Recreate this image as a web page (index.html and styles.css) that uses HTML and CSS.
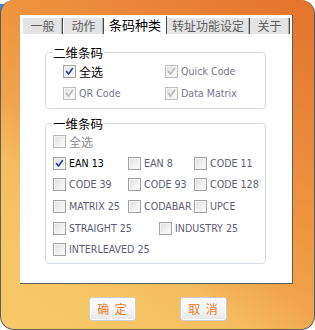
FILE: index.html
```html
<!DOCTYPE html>
<html>
<head>
<meta charset="utf-8">
<link rel="stylesheet" href="styles.css">
</head>
<body>
<div class="win">
  <div class="sheet">
    <div class="tabs">
      <div class="tab tab-sm gap">一般</div>
      <div class="tab tab-sm">动作</div>
      <div class="tab tab-md active">条码种类</div>
      <div class="tab tab-lg">转址功能设定</div>
      <div class="tab tab-sm">关于</div>
    </div>
    <div class="page">
      <fieldset class="group g2d">
        <legend>二维条码</legend>
        <div class="grid2">
          <label class="cb on"><span class="box"><svg viewBox="0 0 13 13"><path d="M3 6.5 L5.3 9.6 L10 3"/></svg></span><span class="cjk">全选</span></label>
          <label class="cb dis"><span class="box"><svg viewBox="0 0 13 13"><path d="M3 6.5 L5.3 9.6 L10 3"/></svg></span>Quick Code</label>
          <label class="cb dis"><span class="box"><svg viewBox="0 0 13 13"><path d="M3 6.5 L5.3 9.6 L10 3"/></svg></span>QR Code</label>
          <label class="cb dis"><span class="box"><svg viewBox="0 0 13 13"><path d="M3 6.5 L5.3 9.6 L10 3"/></svg></span>Data Matrix</label>
        </div>
      </fieldset>
      <fieldset class="group g1d">
        <legend>一维条码</legend>
        <div class="row">
          <label class="cb grey"><span class="box"></span><span class="cjk">全选</span></label>
        </div>
        <div class="row">
          <label class="cb on c1"><span class="box"><svg viewBox="0 0 13 13"><path d="M3 6.5 L5.3 9.6 L10 3"/></svg></span>EAN 13</label>
          <label class="cb c2"><span class="box"></span>EAN 8</label>
          <label class="cb"><span class="box"></span>CODE 11</label>
        </div>
        <div class="row">
          <label class="cb c1"><span class="box"></span>CODE 39</label>
          <label class="cb c2"><span class="box"></span>CODE 93</label>
          <label class="cb"><span class="box"></span>CODE 128</label>
        </div>
        <div class="row">
          <label class="cb c1"><span class="box"></span>MATRIX 25</label>
          <label class="cb c2"><span class="box"></span>CODABAR</label>
          <label class="cb"><span class="box"></span>UPCE</label>
        </div>
        <div class="row">
          <label class="cb cw"><span class="box"></span>STRAIGHT 25</label>
          <label class="cb"><span class="box"></span>INDUSTRY 25</label>
        </div>
        <div class="row">
          <label class="cb"><span class="box"></span>INTERLEAVED 25</label>
        </div>
      </fieldset>
    </div>
  </div>
  <div class="buttons">
    <button class="btn">确 定</button>
    <button class="btn">取 消</button>
  </div>
</div>
</body>
</html>
```

FILE: styles.css
```css
html {
  /* white desktop with a sliver of blue behind the rounded top-left corner */
  background: linear-gradient(#3b8be0, #3b8be0) 0 4px / 6px 13px no-repeat, #ffffff;
}

body {
  margin: 0;
}

.win {
  width: 315px;
  height: 330px;
  box-sizing: border-box;
  border: 1px solid #5c5c5c;
  border-top: 0;
  border-radius: 14px;
  padding-top: 15px;
  background: linear-gradient(215deg, #e3732a 0%, #eb863a 25%, #ef953f 42%, #f1a34d 57%, #f4bb5f 68%, #f6c465 80%, #f7c867 100%);
  overflow: hidden;
}

.sheet {
  margin-left: 19px;
  width: 273px;
  height: 269px;
  box-sizing: border-box;
  background: #ffffff;
  border-right: 1px solid #5e5e5e;
  border-bottom: 1px solid #5e5e5e;
}

.tabs {
  display: flex;
  align-items: flex-end;
  height: 19px;
  padding-left: 3px;
}

.tab {
  box-sizing: border-box;
  height: 16px;
  background: #e3e3e3;
  color: #5c5c5c;
  font-family: "Noto Sans CJK SC", sans-serif;
  font-size: 12px;
  line-height: 16px;
  text-align: center;
  border-right: 1px solid #4a4a4a;
  box-shadow: inset -1px 0 0 #b4b4b4;
}

.tab.gap {
  margin-right: 1px;
}

.tab-sm { width: 40px; }
.tab-md { width: 63px; }
.tab-lg { width: 83px; }

.tab.active {
  height: 18px;
  background: #ffffff;
  color: #000000;
  font-size: 13px;
  line-height: 17px;
  box-shadow: none;
}

.page {
  padding: 11px 0 0 25px;
}

.group {
  margin: 0;
  width: 221px;
  box-sizing: border-box;
  border: 1px solid #d3dae2;
  border-radius: 4px;
  padding: 0 0 0 7px;
}

.group legend {
  padding: 0 1px;
  margin-left: -1px;
  font-family: "Noto Sans CJK SC", sans-serif;
  font-size: 12.5px;
  line-height: 15px;
  color: #000000;
}

.g2d {
  padding-bottom: 4px;
}

.g1d {
  margin-top: 7px;
  padding-bottom: 2px;
}

.grid2 {
  display: grid;
  grid-template-columns: 102px auto;
  grid-auto-rows: 22px;
  align-items: center;
  margin-left: 10px;
}

.row {
  display: flex;
  align-items: center;
  height: 21.6px;
}

.c1 { width: 75px; }
.c2 { width: 66px; }
.cw { width: 106px; }

.cb {
  display: flex;
  align-items: center;
  gap: 3px;
  font-family: "DejaVu Sans Condensed", "DejaVu Sans", sans-serif;
  font-stretch: condensed;
  font-size: 10.6px;
  line-height: 13px;
  color: #5d5d72;
  white-space: nowrap;
}

.cjk {
  font-family: "Noto Sans CJK SC", sans-serif;
  font-size: 12px;
}

.cb.on {
  color: #000000;
}

.cb.dis {
  color: #76768a;
}

.cb.grey {
  color: #8c8c8c;
}

.box {
  flex: none;
  width: 13px;
  height: 13px;
  box-sizing: border-box;
  border: 1px solid #a3a3a3;
  background: linear-gradient(135deg, #dedede 0%, #f0f0f0 55%, #fbfbfb 100%);
  box-shadow: inset 0 0 0 1px #f4f4f4;
}

.box svg {
  display: block;
  width: 11px;
  height: 11px;
  margin: 0;
}

.box path {
  fill: none;
  stroke: #21398f;
  stroke-width: 1.9;
  stroke-linecap: round;
  stroke-linejoin: round;
}

.cb.dis .box {
  border-color: #bdbdbd;
}

.cb.dis .box path {
  stroke: #b5b5b5;
}

.cb.grey .box {
  border-color: #b9b9b9;
}

.buttons {
  display: flex;
  justify-content: center;
  gap: 44px;
  margin-top: 13px;
}

.btn {
  width: 47px;
  height: 24px;
  padding: 0;
  border: 1px solid #cdcdcd;
  border-radius: 3px;
  background: linear-gradient(#fefefe 0%, #f6f6f6 50%, #e6e6e6 100%);
  box-shadow: inset 0 0 0 1px #ffffff;
  color: #f07a1e;
  font-family: "Noto Sans CJK SC", sans-serif;
  font-size: 12px;
  word-spacing: 3px;
  line-height: 20px;
}
```
